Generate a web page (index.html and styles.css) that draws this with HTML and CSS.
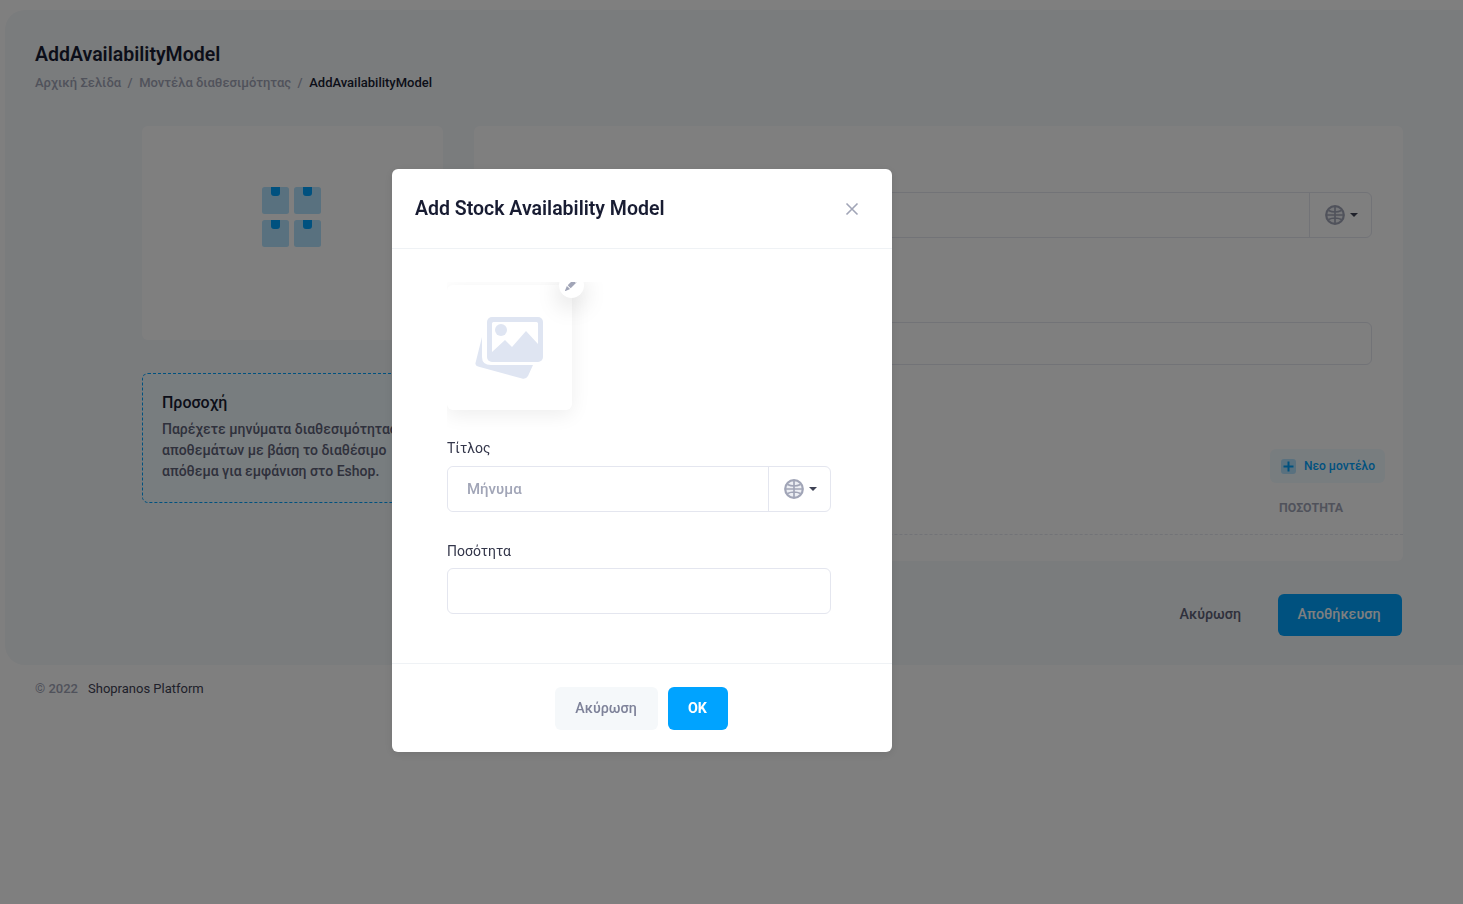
FILE: index.html
```html
<!DOCTYPE html>
<html lang="en">
<head>
    <meta charset="UTF-8">
    <meta name="viewport" content="width=device-width, initial-scale=1.0">
    <title>AddAvailabilityModel</title>
    <link rel="stylesheet" href="styles.css">
</head>
<body>
    <div class="page">
        <div class="content">
            <h1 class="page-title">AddAvailabilityModel</h1>
            <div class="breadcrumb">
                <span class="crumb">Αρχική Σελίδα</span>
                <span class="crumb-sep">/</span>
                <span class="crumb">Μοντέλα διαθεσιμότητας</span>
                <span class="crumb-sep">/</span>
                <span class="crumb-current">AddAvailabilityModel</span>
            </div>

            <div class="columns">
                <div class="side">
                    <div class="card logo-card">
                        <svg class="boxes" width="60" height="60" viewBox="0 0 60 60">
                            <g fill="#b3e3ff">
                                <rect x="0" y="0" width="27" height="27" rx="2.5"/>
                                <rect x="32" y="0" width="27" height="27" rx="2.5"/>
                                <rect x="0" y="33" width="27" height="27" rx="2.5"/>
                                <rect x="32" y="33" width="27" height="27" rx="2.5"/>
                            </g>
                            <g fill="#00a3ff">
                                <path d="M9 0h9v6a3 3 0 0 1-3 3h-3a3 3 0 0 1-3-3z"/>
                                <path d="M41 0h9v6a3 3 0 0 1-3 3h-3a3 3 0 0 1-3-3z"/>
                                <path d="M9 33h9v6a3 3 0 0 1-3 3h-3a3 3 0 0 1-3-3z"/>
                                <path d="M41 33h9v6a3 3 0 0 1-3 3h-3a3 3 0 0 1-3-3z"/>
                            </g>
                        </svg>
                    </div>
                    <div class="notice">
                        <h4 class="notice-title">Προσοχή</h4>
                        <p class="notice-text">Παρέχετε μηνύματα διαθεσιμότητας αποθεμάτων με βάση το διαθέσιμο απόθεμα για εμφάνιση στο Eshop.</p>
                    </div>
                </div>

                <div class="main">
                    <div class="card form-card">
                        <div class="input-group group-one">
                            <div class="input-box"></div>
                            <div class="lang-btn">
                                <svg class="globe" width="20" height="20" viewBox="0 0 20 20"><use href="#globe-icon"/></svg>
                                <span class="caret"></span>
                            </div>
                        </div>
                        <div class="input-box group-two"></div>
                        <div class="toolbar">
                            <button class="new-btn" type="button">
                                <span class="plus-icon">
                                    <svg width="15" height="15" viewBox="0 0 15 15"><path d="M7.5 2.5v10M2.5 7.5h10" stroke="#00a3ff" stroke-width="2"/></svg>
                                </span>
                                Νεο μοντέλο
                            </button>
                        </div>
                        <div class="table-head"><span class="col-title">ΠΟΣΟΤΗΤΑ</span></div>
                    </div>
                    <div class="actions">
                        <button class="link-btn" type="button">Ακύρωση</button>
                        <button class="save-btn" type="button">Αποθήκευση</button>
                    </div>
                </div>
            </div>
        </div>
        <div class="footer">
            <span class="footer-year">© 2022</span>
            <span class="footer-name">Shopranos Platform</span>
        </div>
    </div>

    <div class="backdrop"></div>

    <div class="modal-wrap">
        <div class="modal">
            <div class="modal-header">
                <h2 class="modal-title">Add Stock Availability Model</h2>
                <svg class="close-icon" width="14" height="14" viewBox="0 0 14 14"><path d="M1.5 1.5l11 11M12.5 1.5l-11 11" stroke="#a1a5b7" stroke-width="1.6"/></svg>
            </div>
            <div class="modal-body">
                <div class="image-clip">
                    <div class="image-box">
                        <svg class="image-icon" width="70" height="65" viewBox="0 0 70 65">
                            <path fill="#dfe5f2" d="M7 22L0.5 48Q0 50.5 3 51.5L47 63.5Q51 64.5 53 61L58 50H16Q7 50 7 42Z"/>
                            <rect fill="#dfe5f2" x="12" y="2" width="56" height="45" rx="5"/>
                            <path fill="#fff" d="M17 8.5Q17 7 18.5 7H61.5Q63 7 63 8.5V29L51 16L37 32L30 25L17 37Z"/>
                            <circle fill="#dfe5f2" cx="26" cy="15" r="6"/>
                        </svg>
                        <span class="edit-btn">
                            <svg width="13" height="13" viewBox="0 0 16 16"><path fill="#a1a5b7" d="M12.854.146a.5.5 0 0 0-.707 0L10.5 1.793 14.207 5.5l1.647-1.646a.5.5 0 0 0 0-.708l-3-3zm.646 6.061L9.793 2.5 3.293 9H3.5a.5.5 0 0 1 .5.5v.5h.5a.5.5 0 0 1 .5.5v.5h.5a.5.5 0 0 1 .5.5v.5h.5a.5.5 0 0 1 .5.5v.207l6.5-6.5zm-7.468 7.468A.5.5 0 0 1 6 13.5V13h-.5a.5.5 0 0 1-.5-.5V12h-.5a.5.5 0 0 1-.5-.5V11h-.5a.5.5 0 0 1-.5-.5V10h-.5a.499.499 0 0 1-.175-.032l-.179.178a.5.5 0 0 0-.11.168l-2 5a.5.5 0 0 0 .65.65l5-2a.5.5 0 0 0 .168-.11l.178-.178z"/></svg>
                        </span>
                    </div>
                </div>

                <label class="field-label">Τίτλος</label>
                <div class="input-group">
                    <div class="input-box"><span class="placeholder">Μήνυμα</span></div>
                    <div class="lang-btn">
                        <svg class="globe" width="20" height="20" viewBox="0 0 20 20">
                            <g id="globe-icon" fill="none" stroke="#a1a5b7">
                                <circle cx="10" cy="10" r="8.8" stroke-width="2.2" fill="#eceef3"/>
                                <path stroke-width="1.7" d="M10 1.5v17M1.5 10h17M3.5 5.5Q10 8.5 16.5 5.5M3.5 14.5Q10 11.5 16.5 14.5"/>
                            </g>
                        </svg>
                        <span class="caret"></span>
                    </div>
                </div>

                <label class="field-label second">Ποσότητα</label>
                <div class="input-box single"></div>
            </div>
            <div class="modal-footer">
                <button class="cancel-btn" type="button">Ακύρωση</button>
                <button class="ok-btn" type="button">OK</button>
            </div>
        </div>
    </div>
</body>
</html>
```

FILE: styles.css
```css
html, body {
    margin: 0;
    padding: 0;
    height: 100%;
    overflow: hidden;
    background: #ffffff;
    font-family: Roboto, "Liberation Sans", sans-serif;
    color: #181c32;
}

button {
    font-family: inherit;
    border: none;
    cursor: pointer;
}

.page {
    padding: 10px 0 0 5px;
}

.content {
    height: 655px;
    box-sizing: border-box;
    padding: 33px 60px 0 30px;
    background: #f5f8fa;
    border-radius: 20px 0 0 20px;
}

.page-title {
    margin: 0;
    font-size: 19.5px;
    line-height: 24px;
    font-weight: 600;
    color: #181c32;
}

.breadcrumb {
    display: flex;
    gap: 6.5px;
    margin-top: 6px;
    font-size: 13px;
    line-height: 20px;
    font-weight: 500;
    color: #a1a5b7;
}

.crumb-current {
    color: #181c32;
}

.columns {
    display: flex;
    gap: 31px;
    margin: 33px 0 0 107px;
}

.side {
    width: 301px;
    flex-shrink: 0;
}

.main {
    flex: 1;
}

.card {
    background: #ffffff;
    border-radius: 6px;
}

.logo-card {
    height: 214px;
    box-sizing: border-box;
    padding: 61px 2px 0 0;
    display: flex;
    justify-content: center;
}

.notice {
    margin-top: 33px;
    height: 130px;
    box-sizing: border-box;
    padding: 19px 19px;
    background: #f1faff;
    border: 1px dashed #00a3ff;
    border-radius: 6px;
}

.notice-title {
    margin: 0 0 6px;
    font-size: 16px;
    line-height: 20px;
    font-weight: 500;
    color: #181c32;
}

.notice-text {
    margin: 0;
    font-size: 14px;
    line-height: 21px;
    font-weight: 500;
    color: #5e6278;
}

.form-card {
    height: 435px;
    box-sizing: border-box;
    padding: 66px 31px 0 32px;
}

.input-group {
    display: flex;
    height: 46px;
    box-sizing: border-box;
    background: #ffffff;
    border: 1px solid #e4e6ef;
    border-radius: 6px;
}

.input-group .input-box {
    flex: 1;
    border: none;
    border-radius: 6px 0 0 6px;
    height: auto;
}

.input-box {
    box-sizing: border-box;
    height: 46px;
    padding: 0 19px;
    display: flex;
    align-items: center;
    background: #ffffff;
    border: 1px solid #e4e6ef;
    border-radius: 6px;
}

.group-two {
    height: 43px;
    margin-top: 84px;
}

.placeholder {
    font-size: 15px;
    font-weight: 500;
    color: #a1a5b7;
}

.lang-btn {
    width: 62px;
    box-sizing: border-box;
    display: flex;
    align-items: center;
    padding-left: 15px;
    gap: 5px;
    border-left: 1px solid #e4e6ef;
}

.caret {
    width: 0;
    height: 0;
    border-left: 4px solid transparent;
    border-right: 4px solid transparent;
    border-top: 4px solid #3f4254;
}

.toolbar {
    display: flex;
    justify-content: flex-end;
    margin: 84px -13px 0 0;
}

.new-btn {
    display: flex;
    align-items: center;
    gap: 8px;
    height: 34px;
    padding: 0 10px 0 11px;
    background: #f1faff;
    border-radius: 6px;
    font-size: 12px;
    font-weight: 500;
    color: #00a3ff;
}

.plus-icon {
    display: flex;
    background: #b3e3ff;
    border-radius: 3px;
}

.table-head {
    margin: 0 -31px 0 -32px;
    height: 52px;
    box-sizing: border-box;
    padding: 14px 0 0;
    text-align: right;
    border-bottom: 1px dashed #e4e6ef;
}

.col-title {
    display: inline-block;
    width: 124px;
    text-align: left;
    font-size: 12.35px;
    line-height: 15px;
    font-weight: 700;
    color: #a1a5b7;
}

.actions {
    display: flex;
    justify-content: flex-end;
    align-items: center;
    gap: 17px;
    margin: 33px 1px 0 0;
}

.link-btn {
    padding: 0 20px 2px;
    height: 42px;
    background: transparent;
    font-size: 14.3px;
    font-weight: 500;
    color: #5e6278;
}

.save-btn {
    width: 124px;
    height: 42px;
    padding: 0 2px 2px 0;
    background: #00a3ff;
    border-radius: 6px;
    font-size: 14.3px;
    font-weight: 500;
    color: #ffffff;
}

.footer {
    display: flex;
    gap: 10px;
    padding: 16px 0 0 30px;
    font-size: 13px;
    line-height: 16px;
}

.footer-year {
    font-weight: 500;
    color: #a1a5b7;
}

.footer-name {
    color: #3f4254;
}

.backdrop {
    position: fixed;
    top: 0;
    left: 0;
    right: 0;
    bottom: 0;
    background: rgba(0, 0, 0, 0.5);
}

.modal-wrap {
    position: fixed;
    top: 169px;
    left: 392px;
}

.modal {
    width: 500px;
    background: #ffffff;
    border-radius: 6px;
    box-shadow: 0 2px 10px rgba(0, 0, 0, 0.1);
}

.modal-header {
    display: flex;
    justify-content: space-between;
    align-items: center;
    height: 80px;
    box-sizing: border-box;
    padding: 0 33px 0 23px;
    border-bottom: 1px solid #eff2f5;
}

.modal-title {
    margin: 0;
    font-size: 19.5px;
    font-weight: 600;
    color: #181c32;
}

.modal-body {
    height: 414px;
    box-sizing: border-box;
    padding: 33px 61px 0 55px;
}

.image-clip {
    height: 148px;
    margin-bottom: 10px;
    padding-top: 3px;
    box-sizing: border-box;
    overflow: hidden;
}

.image-box {
    position: relative;
    width: 125px;
    height: 125px;
    background: #ffffff;
    border-radius: 6px;
    box-shadow: 0 5px 20px rgba(0, 0, 0, 0.07);
}

.image-icon {
    position: absolute;
    top: 30px;
    left: 28px;
}

.edit-btn {
    position: absolute;
    top: -12px;
    right: -12px;
    width: 25px;
    height: 25px;
    box-sizing: border-box;
    padding: 0 1px 2px 0;
    display: flex;
    align-items: center;
    justify-content: center;
    background: #ffffff;
    border-radius: 50%;
    box-shadow: 0 8px 25px rgba(0, 0, 0, 0.15);
}

.field-label {
    display: block;
    margin-bottom: 9px;
    font-size: 14px;
    line-height: 17px;
    color: #33364a;
}

.field-label.second {
    margin-top: 31px;
    margin-bottom: 8px;
}

.modal-footer {
    display: flex;
    justify-content: center;
    gap: 10px;
    height: 89px;
    box-sizing: border-box;
    padding: 23px 2px 0 0;
    border-top: 1px solid #eff2f5;
}

.cancel-btn {
    width: 103px;
    height: 43px;
    padding: 0 0 2px;
    background: #f5f8fa;
    border-radius: 6px;
    font-size: 14.3px;
    font-weight: 500;
    color: #7e8299;
}

.ok-btn {
    width: 60px;
    height: 43px;
    padding: 0 0 2px;
    background: #00a3ff;
    border-radius: 6px;
    font-size: 14.3px;
    font-weight: 700;
    color: #ffffff;
}
```
